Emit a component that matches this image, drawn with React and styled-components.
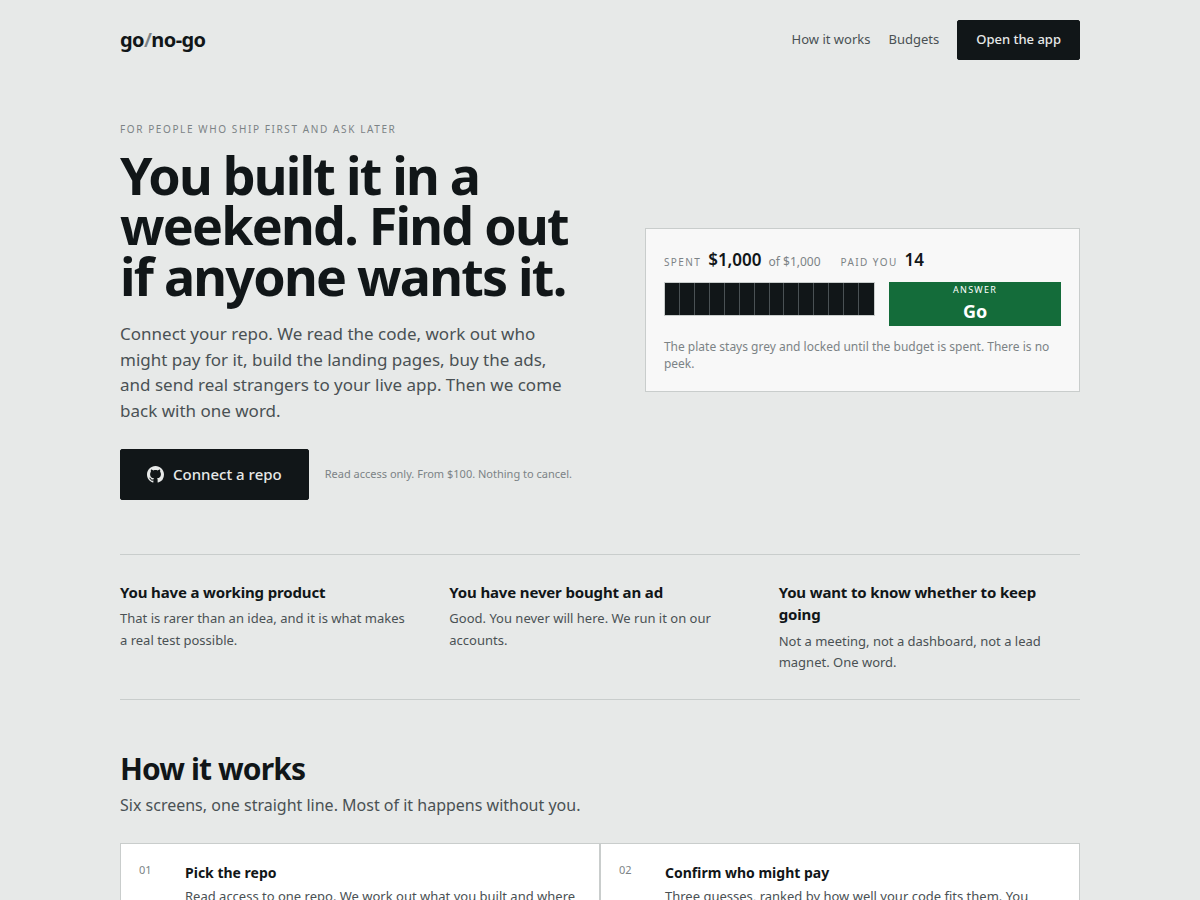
import React from 'react';
import styled, { createGlobalStyle } from 'styled-components';

const GlobalStyle = createGlobalStyle`
  * {
    box-sizing: border-box;
  }
  body {
    margin: 0;
    background: #e7e9e8;
    color: #111618;
    font-family: 'Noto Sans', sans-serif;
    font-size: 15px;
    line-height: 1.5;
  }
  h1, h2, h3, p {
    margin: 0;
  }
`;

const Page = styled.div`
  max-width: 1008px;
  margin: 0 auto;
  padding: 0 24px;
`;

const Header = styled.header`
  display: flex;
  align-items: center;
  justify-content: space-between;
  padding: 20px 0;
`;

const Logo = styled.a`
  color: #111618;
  font-size: 20px;
  font-weight: 700;
  letter-spacing: -0.03em;
  text-decoration: none;

  span {
    color: #7c8386;
    font-weight: 600;
  }
`;

const Nav = styled.nav`
  display: flex;
  align-items: center;
  gap: 18px;
`;

const NavLink = styled.a`
  color: #4a5154;
  font-size: 13px;
  text-decoration: none;
`;

const Button = styled.button`
  display: inline-flex;
  align-items: center;
  justify-content: center;
  gap: 9px;
  padding: ${props => (props.$large ? '13px 26px' : '9px 18px')};
  border: 1px solid #111618;
  border-radius: 2px;
  background: #111618;
  color: #e7e9e8;
  font-family: inherit;
  font-size: ${props => (props.$large ? '15px' : '13px')};
  font-weight: 500;
  line-height: 1.5;
  cursor: pointer;
`;

const Hero = styled.section`
  display: grid;
  grid-template-columns: 1.05fr 0.95fr;
  align-items: center;
  gap: 44px;
  padding: 40px 0 54px;
`;

const Label = styled.span`
  color: #7c8386;
  font-size: 10px;
  letter-spacing: 0.14em;
  text-transform: uppercase;
`;

const Kicker = styled(Label)`
  display: block;
  letter-spacing: 0.16em;
  line-height: 18px;
`;

const Title = styled.h1`
  margin: 12px 0 19px;
  font-size: 52px;
  font-weight: 700;
  letter-spacing: -0.034em;
  line-height: 0.98;
`;

const Lead = styled.p`
  max-width: 460px;
  color: #4a5154;
  font-size: 17px;
  line-height: 1.5;
`;

const Actions = styled.div`
  display: flex;
  flex-wrap: wrap;
  align-items: center;
  gap: 16px;
  margin-top: 26px;
`;

const Note = styled.span`
  color: #7c8386;
  font-size: 11px;
`;

const Card = styled.div`
  padding: 18px;
  border: 1px solid #c9cdcc;
  background: #f8f8f8;
`;

const Stats = styled.div`
  display: flex;
  align-items: baseline;
  gap: 20px;
  margin-bottom: 9px;
`;

const Stat = styled.div`
  display: flex;
  align-items: baseline;
  gap: 7px;
  color: #7c8386;
  font-size: 12px;
`;

const Figure = styled.strong`
  color: #111618;
  font-size: 17px;
  font-weight: 600;
  line-height: 26px;
`;

const Reading = styled.div`
  display: grid;
  grid-template-columns: 1.23fr 1fr;
  align-items: start;
  gap: 14px;
`;

const Meter = styled.div`
  display: grid;
  grid-template-columns: repeat(14, 1fr);
  height: 34px;
  border: 1px solid #c9cdcc;
`;

const Cell = styled.span`
  border-right: 1px solid #4a5154;
  background: #111618;

  &:last-child {
    border-right: 0;
  }
`;

const Plate = styled.div`
  display: flex;
  flex-direction: column;
  align-items: center;
  height: 44px;
  background: #146c3a;
  color: #ffffff;
`;

const PlateLabel = styled.span`
  font-size: 9px;
  letter-spacing: 0.14em;
  line-height: 16px;
  text-transform: uppercase;
`;

const Verdict = styled.strong`
  font-size: 18px;
  font-weight: 700;
  line-height: 26px;
`;

const Caption = styled.p`
  margin-top: 12px;
  color: #7c8386;
  font-size: 12px;
  line-height: 1.45;
`;

const Reasons = styled.section`
  display: grid;
  grid-template-columns: repeat(3, 1fr);
  gap: 28px;
  padding: 26px 0 25px;
  border-top: 1px solid #c9cdcc;
  border-bottom: 1px solid #c9cdcc;
`;

const ReasonTitle = styled.h3`
  margin-bottom: 5px;
  font-size: 15px;
  font-weight: 700;
  letter-spacing: -0.01em;
`;

const ReasonText = styled.p`
  max-width: 290px;
  color: #4a5154;
  font-size: 13px;
  line-height: 1.65;
`;

const HowItWorks = styled.section`
  padding: 46px 0;
`;

const SectionTitle = styled.h2`
  font-size: 30px;
  font-weight: 700;
  letter-spacing: -0.03em;
`;

const SectionText = styled.p`
  margin: 2px 0 26px;
  color: #4a5154;
  font-size: 16px;
`;

const Steps = styled.div`
  display: grid;
  grid-template-columns: 1fr 1fr;
`;

const Step = styled.article`
  display: grid;
  grid-template-columns: 28px 1fr;
  gap: 18px;
  padding: 18px;
  border: 1px solid #c9cdcc;
  background: #ffffff;
`;

const StepNumber = styled.span`
  color: #7c8386;
  font-size: 11px;
`;

const StepTitle = styled.h3`
  font-size: 14px;
  font-weight: 700;
  line-height: 22px;
`;

const StepText = styled.p`
  margin-top: 2px;
  color: #4a5154;
  font-size: 13px;
  line-height: 20px;
`;

const reasons = [
  {
    title: 'You have a working product',
    text: 'That is rarer than an idea, and it is what makes a real test possible.',
  },
  {
    title: 'You have never bought an ad',
    text: 'Good. You never will here. We run it on our accounts.',
  },
  {
    title: 'You want to know whether to keep going',
    text: 'Not a meeting, not a dashboard, not a lead magnet. One word.',
  },
];

const steps = [
  {
    number: '01',
    title: 'Pick the repo',
    text: 'Read access to one repo. We work out what you built and where',
  },
  {
    number: '02',
    title: 'Confirm who might pay',
    text: 'Three guesses, ranked by how well your code fits them. You',
  },
];

const GithubMark = () => (
  <svg width="17" height="17" viewBox="0 0 16 16" fill="currentColor" aria-hidden="true">
    <path d="M8 0C3.58 0 0 3.58 0 8c0 3.54 2.29 6.53 5.47 7.59.4.07.55-.17.55-.38 0-.19-.01-.82-.01-1.49-2.01.37-2.53-.49-2.69-.94-.09-.23-.48-.94-.82-1.13-.28-.15-.68-.52-.01-.53.63-.01 1.08.58 1.23.82.72 1.21 1.87.87 2.33.66.07-.52.28-.87.51-1.07-1.78-.2-3.64-.89-3.64-3.95 0-.87.31-1.59.82-2.15-.08-.2-.36-1.02.08-2.12 0 0 .67-.21 2.2.82.64-.18 1.32-.27 2-.27s1.36.09 2 .27c1.53-1.04 2.2-.82 2.2-.82.44 1.1.16 1.92.08 2.12.51.56.82 1.27.82 2.15 0 3.07-1.87 3.75-3.65 3.95.29.25.54.73.54 1.48 0 1.07-.01 1.93-.01 2.2 0 .21.15.46.55.38A8.01 8.01 0 0 0 16 8c0-4.42-3.58-8-8-8z" />
  </svg>
);

const ResultCard = () => (
  <Card>
    <Stats>
      <Stat>
        <Label>Spent</Label>
        <Figure>$1,000</Figure>
        <span>of $1,000</span>
      </Stat>
      <Stat>
        <Label>Paid you</Label>
        <Figure>14</Figure>
      </Stat>
    </Stats>
    <Reading>
      <Meter>
        {Array.from({ length: 14 }, (_, i) => (
          <Cell key={i} />
        ))}
      </Meter>
      <Plate>
        <PlateLabel>Answer</PlateLabel>
        <Verdict>Go</Verdict>
      </Plate>
    </Reading>
    <Caption>The plate stays grey and locked until the budget is spent. There is no peek.</Caption>
  </Card>
);

const App = () => (
  <>
    <GlobalStyle />
    <Page>
      <Header>
        <Logo href="#top">
          go<span>/</span>no-go
        </Logo>
        <Nav>
          <NavLink href="#how">How it works</NavLink>
          <NavLink href="#budgets">Budgets</NavLink>
          <Button type="button">Open the app</Button>
        </Nav>
      </Header>
      <main>
        <Hero>
          <div>
            <Kicker>For people who ship first and ask later</Kicker>
            <Title>You built it in a weekend. Find out if anyone wants it.</Title>
            <Lead>
              Connect your repo. We read the code, work out who might pay for it, build the landing
              pages, buy the ads, and send real strangers to your live app. Then we come back with
              one word.
            </Lead>
            <Actions>
              <Button type="button" $large>
                <GithubMark />
                Connect a repo
              </Button>
              <Note>Read access only. From $100. Nothing to cancel.</Note>
            </Actions>
          </div>
          <ResultCard />
        </Hero>
        <Reasons>
          {reasons.map(reason => (
            <div key={reason.title}>
              <ReasonTitle>{reason.title}</ReasonTitle>
              <ReasonText>{reason.text}</ReasonText>
            </div>
          ))}
        </Reasons>
        <HowItWorks id="how">
          <SectionTitle>How it works</SectionTitle>
          <SectionText>Six screens, one straight line. Most of it happens without you.</SectionText>
          <Steps>
            {steps.map(step => (
              <Step key={step.number}>
                <StepNumber>{step.number}</StepNumber>
                <div>
                  <StepTitle>{step.title}</StepTitle>
                  <StepText>{step.text}</StepText>
                </div>
              </Step>
            ))}
          </Steps>
        </HowItWorks>
      </main>
    </Page>
  </>
);

export default App;
